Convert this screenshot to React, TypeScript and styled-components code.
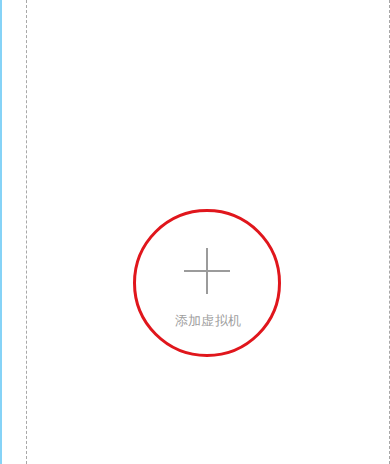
import React from 'react'
import styled, { createGlobalStyle } from 'styled-components';

const GlobalStyle = createGlobalStyle`
    html, body {
        margin: 0;
        padding: 0;
        background: #ffffff;
        font-family: "Noto Sans CJK SC", "Noto Sans", sans-serif;
    }
`;

const Page = styled.div`
    display: flex;
    height: 464px;
    overflow: hidden;
    background: #ffffff;
`;

const EdgeBar = styled.div`
    width: 2px;
    flex-shrink: 0;
    background: #86d3f7;
`;

const Slot = styled.div`
    flex: 1;
    padding-left: 24px;
    display: flex;
`;

const Card = styled.div`
    flex: 1;
    border-left: 1px dashed #a8a8a8;
    border-right: 1px dashed #a8a8a8;
    display: flex;
    flex-direction: column;
    align-items: center;
    padding-top: 209px;
`;

const AddButton = styled.button`
    width: 148px;
    height: 148px;
    box-sizing: border-box;
    border: 3px solid #e0161c;
    border-radius: 50%;
    background: transparent;
    display: flex;
    flex-direction: column;
    align-items: center;
    padding: 35px 0 0;
    margin-left: -2px;
    cursor: pointer;
`;

const Plus = styled.svg`
    width: 48px;
    height: 48px;
    display: block;
`;

const Label = styled.span`
    margin-top: 17px;
    margin-left: 2px;
    font-size: 13px;
    line-height: 18px;
    color: #a0a0a0;
    letter-spacing: 0.3px;
`;

function App() {
    return <>
        <GlobalStyle />
        <Page>
            <EdgeBar />
            <Slot>
                <Card>
                    <AddButton>
                        <Plus viewBox="0 0 48 48">
                            <path d="M1 24 H47 M24 1 V47" stroke="#9b9b9b" strokeWidth="2" fill="none" />
                        </Plus>
                        <Label>添加虚拟机</Label>
                    </AddButton>
                </Card>
            </Slot>
        </Page>
    </>
}

export default App;
